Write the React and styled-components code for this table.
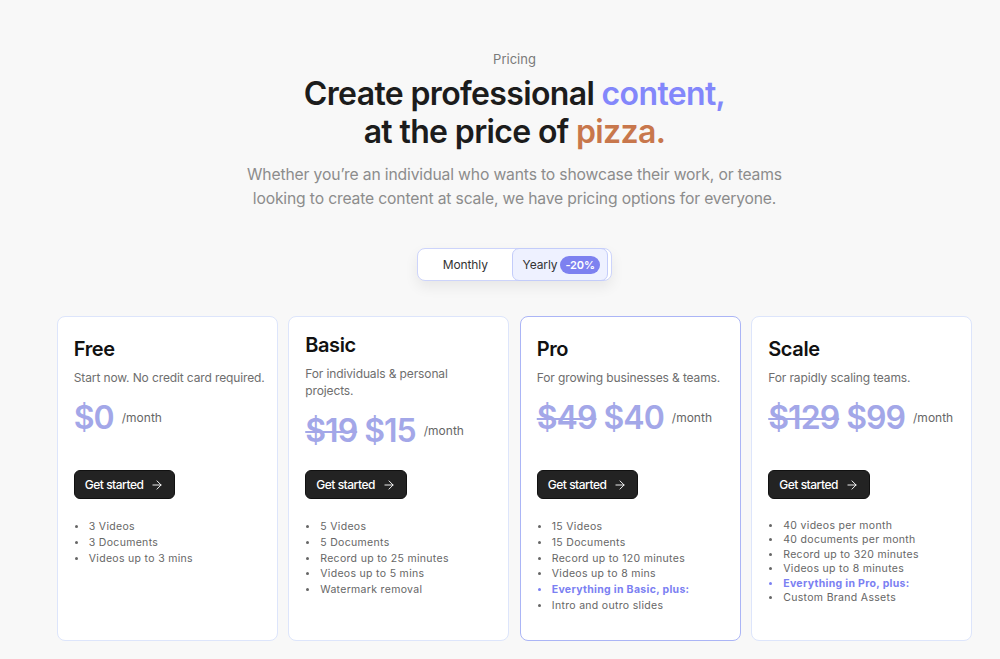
import React from 'react'
import styled, { createGlobalStyle } from 'styled-components'
import { ArrowRight } from 'lucide-react'

const GlobalStyle = createGlobalStyle`
    body {
        margin: 0;
        background: #f8f8f8;
        font-family: Inter, "Noto Sans", sans-serif;
        color: #1f1f1f;
    }
`

const plans = [
    {
        name: 'Free',
        desc: 'Start now. No credit card required.',
        price: '$0',
        features: ['3 Videos', '3 Documents', 'Videos up to 3 mins'],
    },
    {
        name: 'Basic',
        desc: 'For individuals & personal\nprojects.',
        old: '$19',
        price: '$15',
        lift: true,
        features: ['5 Videos', '5 Documents', 'Record up to 25 minutes', 'Videos up to 5 mins', 'Watermark removal'],
    },
    {
        name: 'Pro',
        desc: 'For growing businesses & teams.',
        old: '$49',
        price: '$40',
        active: true,
        features: ['15 Videos', '15 Documents', 'Record up to 120 minutes', 'Videos up to 8 mins', '*Everything in Basic, plus:', 'Intro and outro slides'],
    },
    {
        name: 'Scale',
        desc: 'For rapidly scaling teams.',
        old: '$129',
        price: '$99',
        tight: true,
        features: ['40 videos per month', '40 documents per month', 'Record up to 320 minutes', 'Videos up to 8 minutes', '*Everything in Pro, plus:', 'Custom Brand Assets'],
    },
]

export default function App() {
    return (
        <Page>
            <GlobalStyle />
            <Eyebrow>Pricing</Eyebrow>
            <Heading>
                Create professional <Accent>content,</Accent>
                <br />
                at the price of <Pizza>pizza.</Pizza>
            </Heading>
            <Lead>
                Whether you’re an individual who wants to showcase their work, or teams
                <br />
                looking to create content at scale, we have pricing options for everyone.
            </Lead>
            <Toggle>
                <Segment>Monthly</Segment>
                <Segment $on>
                    Yearly <Badge>-20%</Badge>
                </Segment>
            </Toggle>
            <Cards>
                {plans.map((p) => (
                    <Card key={p.name} $active={p.active}>
                        <Head $lift={p.lift}>
                            <Name>{p.name}</Name>
                            <Desc>{p.desc}</Desc>
                            <PriceRow>
                                {p.old && <Old>{p.old}</Old>}
                                <Price>{p.price}</Price>
                                <Per>/month</Per>
                            </PriceRow>
                        </Head>
                        <Button>
                            Get started <ArrowRight size={14} strokeWidth={1.6} />
                        </Button>
                        <Features $tight={p.tight}>
                            {p.features.map((f) =>
                                f.startsWith('*') ? (
                                    <Item key={f} $hl>{f.slice(1)}</Item>
                                ) : (
                                    <Item key={f}>{f}</Item>
                                )
                            )}
                        </Features>
                    </Card>
                ))}
            </Cards>
        </Page>
    )
}

const Page = styled.div`
    display: flex;
    flex-direction: column;
    align-items: center;
    padding: 50px 0 20px 29px;
    min-height: 659px;
    box-sizing: border-box;
`

const Eyebrow = styled.div`
    font-size: 13px;
    line-height: 18px;
    color: #7a7a7a;
`

const Heading = styled.h1`
    margin: 7px 0 0;
    font-size: 32px;
    line-height: 38px;
    font-weight: 600;
    letter-spacing: -0.02em;
    text-align: center;
    color: #1c1c1c;
`

const Accent = styled.span`
    color: #8387fb;
`

const Pizza = styled.span`
    color: #c8774c;
`

const Lead = styled.p`
    margin: 12px 0 0;
    font-size: 15.7px;
    line-height: 24px;
    letter-spacing: -0.01em;
    color: #8c8c8c;
    text-align: center;
`

const Toggle = styled.div`
    margin-top: 37px;
    display: flex;
    width: 195px;
    height: 33px;
    box-sizing: border-box;
    background: #fff;
    border: 1px solid #cdd4fb;
    border-radius: 8px;
    box-shadow: 0 6px 14px rgba(0, 0, 0, 0.07);
`

const Segment = styled.div`
    width: 50%;
    box-sizing: border-box;
    display: flex;
    align-items: center;
    justify-content: center;
    gap: 3px;
    font-size: 12px;
    letter-spacing: -0.01em;
    color: #333;
    border-radius: 7px;
    background: ${(p) => (p.$on ? '#eef1ff' : 'transparent')};
    border: 1px solid ${(p) => (p.$on ? '#c3ccfa' : 'transparent')};
    margin: -1px;
    padding-left: ${(p) => (p.$on ? '3px' : '0')};
`

const Badge = styled.span`
    background: #7d81f0;
    color: #fff;
    font-size: 11px;
    font-weight: 600;
    padding: 2px 5px;
    border-radius: 9px;
`

const Cards = styled.div`
    margin-top: 35px;
    display: grid;
    grid-template-columns: repeat(4, 221px);
    gap: 10.5px;
`

const Card = styled.div`
    height: 325px;
    box-sizing: border-box;
    background: #fff;
    border: 1px solid ${(p) => (p.$active ? '#abb5f6' : '#dde5fb')};
    border-radius: 8px;
    padding: 0 16px;
    display: flex;
    flex-direction: column;
    align-items: flex-start;
`

const Head = styled.div`
    height: 153px;
    padding-top: ${(p) => (p.$lift ? '16px' : '20px')};
    box-sizing: border-box;
`

const Name = styled.div`
    font-size: 20px;
    line-height: 24px;
    font-weight: 600;
    letter-spacing: -0.02em;
    color: #111;
`

const Desc = styled.div`
    margin-top: 7.5px;
    font-size: 12px;
    line-height: 17px;
    letter-spacing: -0.01em;
    color: #6e6e6e;
    white-space: pre;
`

const PriceRow = styled.div`
    margin-top: 11.5px;
    display: flex;
    align-items: center;
    gap: 7px;
    height: 40px;
`

const Price = styled.span`
    font-size: 32px;
    font-weight: 600;
    letter-spacing: -0.03em;
    color: #a3a7e8;
`

const Old = styled(Price)`
    text-decoration: line-through;
    text-decoration-thickness: 2px;
`

const Per = styled.span`
    font-size: 12px;
    color: #666;
    margin-left: 1px;
`

const Button = styled.button`
    display: flex;
    align-items: center;
    gap: 7px;
    height: 29px;
    padding: 0 10px 0 10px;
    background: #232323;
    border: 1px solid #111;
    border-radius: 6px;
    color: #fff;
    font-family: Inter, sans-serif;
    font-size: 12px;
    font-weight: 500;
    letter-spacing: -0.04em;
`

const Features = styled.ul`
    margin: 20px 0 0;
    padding-left: 14px;
    font-size: 10.5px;
    line-height: ${(p) => (p.$tight ? '14.4px' : '15.8px')};
    letter-spacing: 0.03em;
    color: #666;
`

const Item = styled.li`
    padding-left: 1px;
    ${(p) => p.$hl && 'color: #7b80f2; font-weight: 700;'}
    &::marker {
        font-size: 9px;
    }
`
